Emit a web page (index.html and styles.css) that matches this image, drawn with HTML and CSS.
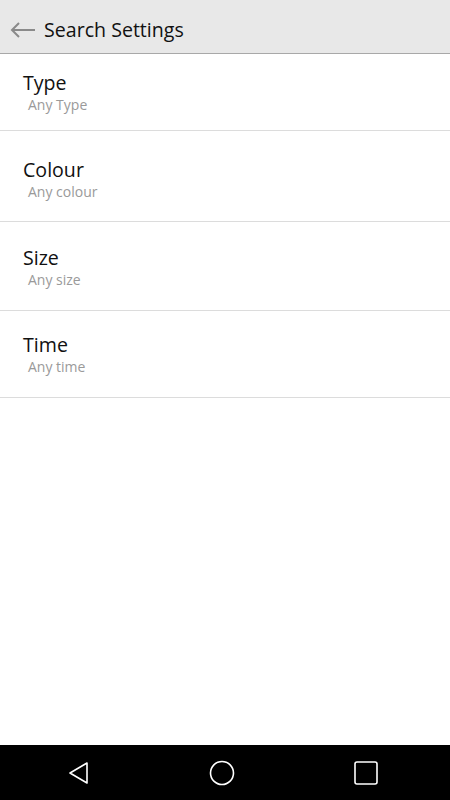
FILE: index.html
```html
<!DOCTYPE html>
<html>
<head>
<meta charset="utf-8">
<link rel="stylesheet" href="styles.css">
</head>
<body>
<div class="screen">
  <header class="appbar">
    <svg class="back" width="26" height="16" viewBox="0 0 26 16">
      <path d="M25 8H2M9 1L2 8l7 7" fill="none" stroke="#8a8a8a" stroke-width="2"/>
    </svg>
    <h1 class="title">Search Settings</h1>
  </header>
  <main class="list">
    <div class="row row-type"><div class="row-title">Type</div><div class="row-sub">Any Type</div></div>
    <div class="row row-colour"><div class="row-title">Colour</div><div class="row-sub">Any colour</div></div>
    <div class="row row-size"><div class="row-title">Size</div><div class="row-sub">Any size</div></div>
    <div class="row row-time"><div class="row-title">Time</div><div class="row-sub">Any time</div></div>
  </main>
  <nav class="navbar">
    <svg width="22" height="24" viewBox="0 0 22 24"><path d="M19 2L2 12l17 10z" fill="none" stroke="#fff" stroke-width="1.6" stroke-linejoin="round"/></svg>
    <svg width="26" height="26" viewBox="0 0 26 26"><circle cx="13" cy="13" r="11.5" fill="none" stroke="#fff" stroke-width="1.6"/></svg>
    <svg width="24" height="24" viewBox="0 0 24 24"><rect x="1" y="1" width="22" height="22" rx="2" fill="none" stroke="#fff" stroke-width="1.6"/></svg>
  </nav>
</div>
</body>
</html>
```
FILE: styles.css
```css
html, body { margin: 0; padding: 0; }
body { font-family: "Open Sans", "Noto Sans", sans-serif; background: #fff; }
.screen { width: 450px; height: 800px; display: flex; flex-direction: column; }
.appbar { height: 53px; background: #e8e8e8; border-bottom: 1px solid #a8a8a8; display: flex; align-items: center; padding-left: 10px; gap: 8px; flex-shrink: 0; }
.back { margin-top: 6px; }
.title { margin: 0; font-size: 19.6px; font-weight: 400; color: #111; padding-top: 5px; }
.list { flex: 1; }
.row { border-bottom: 1px solid #dcdcdc; padding-left: 23px; }
.row-title { font-size: 19.6px; line-height: 24px; color: #111; }
.row-sub { font-size: 14px; line-height: 20px; color: #9a9a9a; padding-left: 5px; }
.row-type { padding-top: 17px; padding-bottom: 15px; }
.row-colour { padding-top: 27px; padding-bottom: 19px; }
.row-size { padding-top: 24px; padding-bottom: 20px; }
.row-time { padding-top: 22px; padding-bottom: 20px; }
.navbar { height: 55px; background: #000; display: flex; align-items: center; justify-content: space-around; padding: 0 13px 0 9px; flex-shrink: 0; }
```
